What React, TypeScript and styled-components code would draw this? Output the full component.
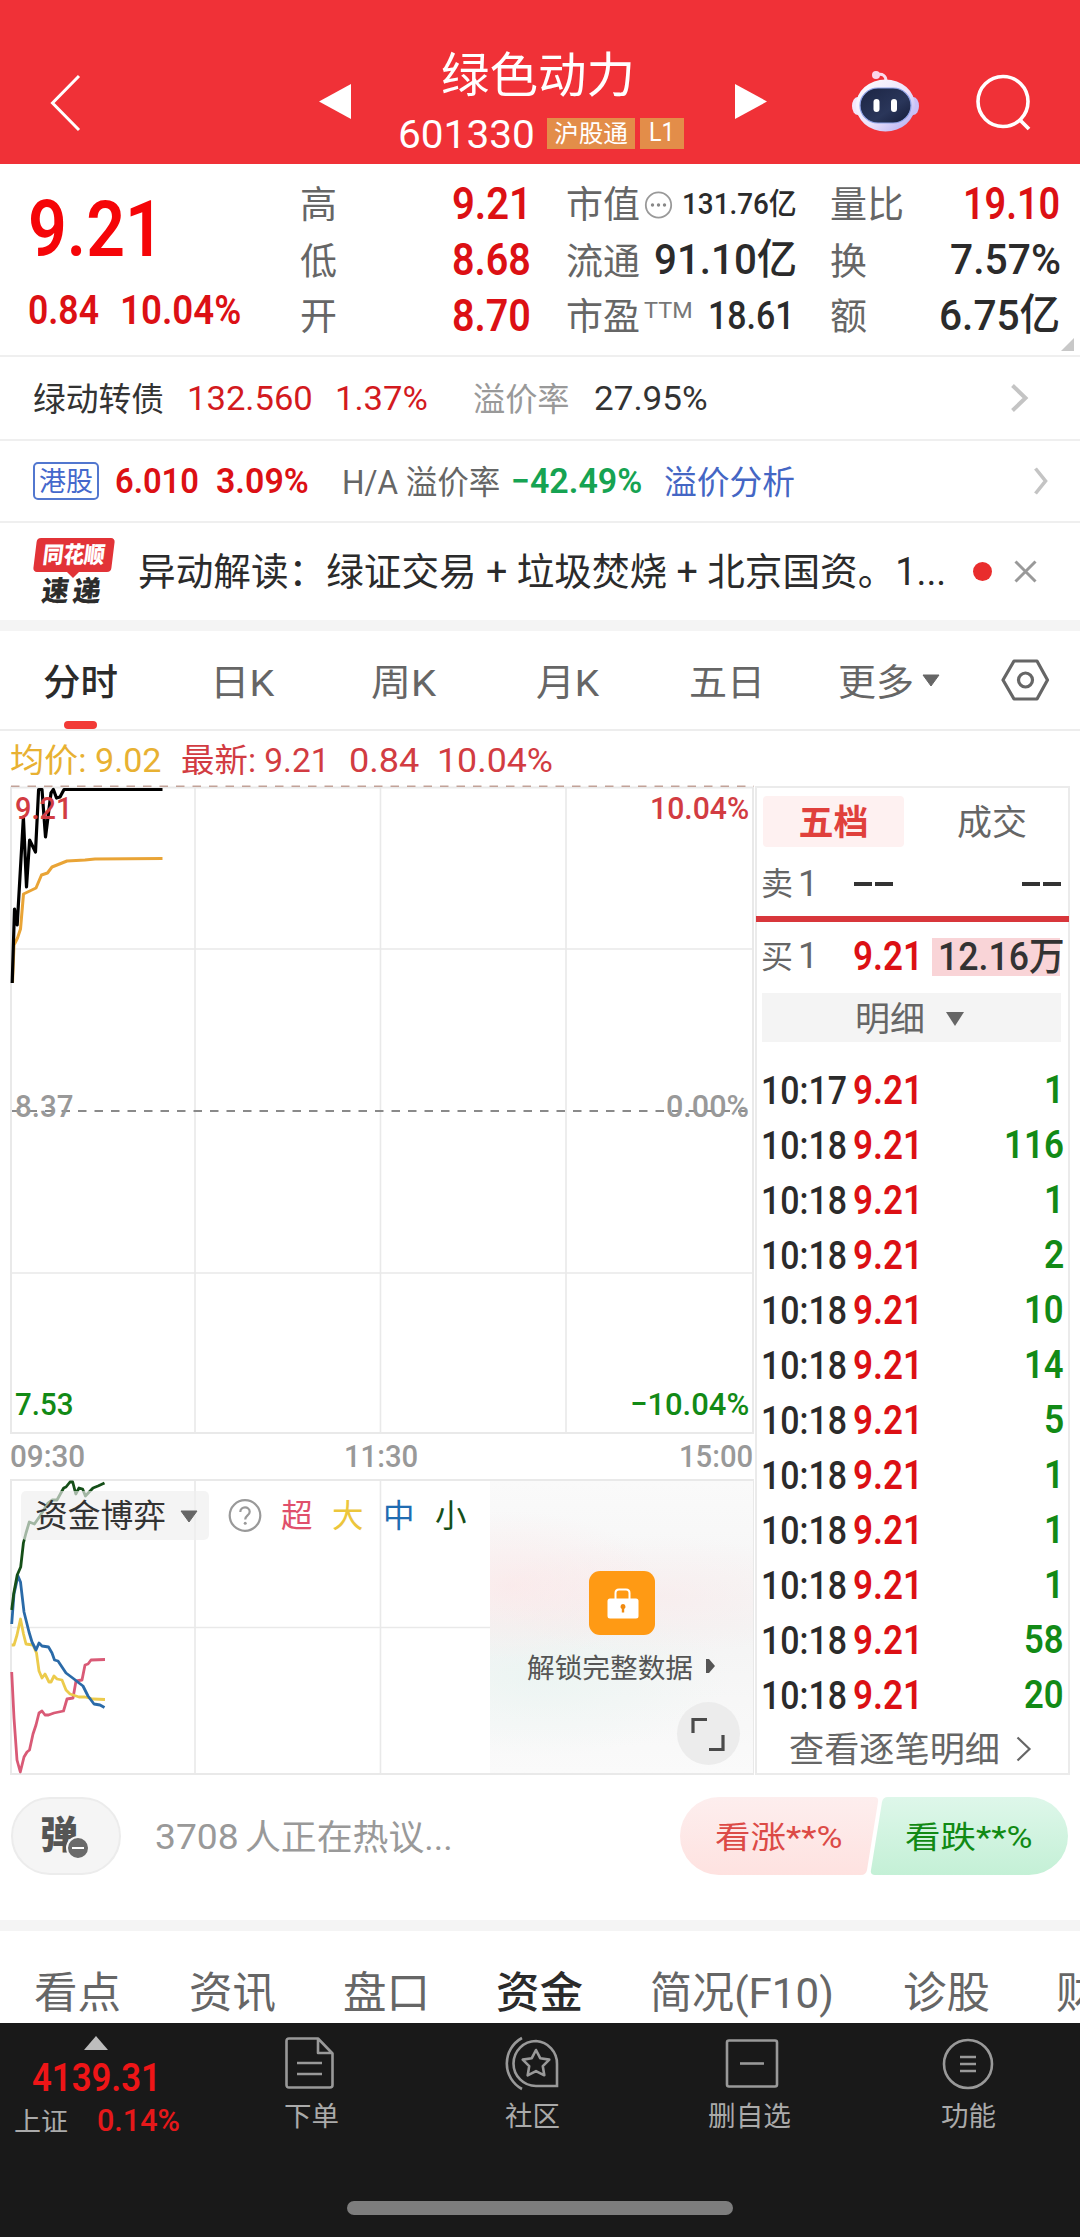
import React, { useLayoutEffect, useRef, useState } from "react";
import styled, { createGlobalStyle } from "styled-components";

const GlobalStyle = createGlobalStyle`
  * { box-sizing: border-box; }
  body {
    margin: 0;
    background: #fff;
    font-family: Roboto, "Noto Sans CJK SC", sans-serif;
  }
`;

/* ---------- text fitted to a column width ---------- */

interface FitStyle {
  $w: number;
  $ml?: number;
  $size: number;
  $color?: string;
  $weight?: number;
}

const FitBox = styled.span<FitStyle>`
  display: block;
  flex: none;
  width: ${(p) => p.$w}px;
  margin-left: ${(p) => p.$ml ?? 0}px;
  font-size: ${(p) => p.$size}px;
  line-height: 1.2;
  font-weight: ${(p) => p.$weight ?? 400};
  color: ${(p) => p.$color ?? "#666"};
  white-space: nowrap;
`;

const FitInner = styled.span`
  display: inline-block;
  white-space: pre;
  transform-origin: 0 50%;
`;

interface FitProps {
  w: number;
  ml?: number;
  size: number;
  color?: string;
  weight?: number;
  dy?: number;
  children: string;
}

function Fit({ w, ml, size, color, weight, dy = 1, children }: FitProps) {
  const ref = useRef<HTMLSpanElement>(null);
  const [scale, setScale] = useState(1);
  useLayoutEffect(() => {
    if (ref.current) setScale(w / ref.current.offsetWidth);
  }, [w, children]);
  return (
    <FitBox $w={w} $ml={ml} $size={size} $color={color} $weight={weight}>
      <FitInner ref={ref} style={{ transform: `translateY(${dy}px) scaleX(${scale})` }}>
        {children}
      </FitInner>
    </FitBox>
  );
}

const RED = "#dc1014";
const INK = "#2b2b2b";
const GREY = "#666";
const GREEN = "#128a16";

/* ---------- page ---------- */

const Page = styled.main`
  width: 1080px;
  height: 2237px;
  overflow: hidden;
  display: flex;
  flex-direction: column;
  background: #fff;
`;

const Icon = styled.svg<{ $ml?: number }>`
  display: block;
  flex: none;
  margin-left: ${(p) => p.$ml ?? 0}px;
  overflow: visible;
`;

/* ---------- header ---------- */

const Header = styled.header`
  height: 164px;
  flex: none;
  background: #f03137;
  display: flex;
  align-items: flex-start;
  padding: 47px 0 0 50px;
`;

const Row = styled.div<{ $h?: number; $pl?: number }>`
  display: flex;
  align-items: center;
  flex: none;
  height: ${(p) => (p.$h ? `${p.$h}px` : "auto")};
  padding-left: ${(p) => p.$pl ?? 0}px;
`;

const TitleBlock = styled.div`
  width: 288px;
  margin-left: 46px;
  display: flex;
  flex-direction: column;
`;

const CodeRow = styled.div`
  display: flex;
  align-items: center;
  height: 66px;
  margin-top: -1px;
`;

const Tag = styled.span<{ $w: number; $ml: number }>`
  flex: none;
  width: ${(p) => p.$w}px;
  height: 31px;
  margin-left: ${(p) => p.$ml}px;
  background: #e38d49;
  display: flex;
  justify-content: center;
  align-items: center;
`;

const HeaderIcon = styled(Icon)<{ $mt: number }>`
  margin-top: ${(p) => p.$mt}px;
`;

function Robot() {
  return (
    <HeaderIcon $ml={84} $mt={24} width="67" height="62" viewBox="0 0 67 62">
      <defs>
        <linearGradient id="shell" x1="0" y1="0" x2="1" y2="1">
          <stop offset="0" stopColor="#ffffff" />
          <stop offset="0.55" stopColor="#ece2fa" />
          <stop offset="1" stopColor="#aaa6f2" />
        </linearGradient>
        <linearGradient id="visor" x1="0" y1="0" x2="1" y2="1">
          <stop offset="0" stopColor="#1c2544" />
          <stop offset="0.6" stopColor="#2a365a" />
          <stop offset="1" stopColor="#141b38" />
        </linearGradient>
      </defs>
      <path d="M24 4 C31 2 34 5 34 10" fill="none" stroke="#fbdcec" strokeWidth="3" />
      <circle cx="24" cy="4" r="4" fill="#fbd7ea" />
      <ellipse cx="5.5" cy="35" rx="5.5" ry="9" fill="#f3e6fa" />
      <ellipse cx="61.5" cy="35" rx="5.5" ry="9" fill="#c9c0f8" />
      <ellipse cx="33.500" cy="34.500" rx="29.500" ry="26" fill="url(#shell)" />
      <rect x="8" y="17" width="51" height="35" rx="18" fill="url(#visor)" stroke="#8fa3e8" strokeWidth="1.200" />
      <rect x="21.500" y="28" width="6" height="13" rx="3" fill="#fff" />
      <rect x="39" y="28" width="6" height="13" rx="3" fill="#fff" />
    </HeaderIcon>
  );
}

function TopBar() {
  return (
    <Header>
      <HeaderIcon $mt={28} width="30" height="56" viewBox="0 0 30 56">
        <path d="M29 1 L2.500 28 L29 55" fill="none" stroke="#fff" strokeWidth="3" />
      </HeaderIcon>
      <HeaderIcon $ml={239} $mt={36} width="33" height="37" viewBox="0 0 33 37">
        <path d="M32 1 V36 L0 18.500 Z" fill="#fff" />
      </HeaderIcon>
      <TitleBlock>
        <Row $h={54} $pl={43}>
          <Fit w={194} size={48} color="#fff" dy={2}>绿色动力</Fit>
        </Row>
        <CodeRow>
          <Fit w={137} size={38.500} color="#fff" dy={2}>601330</Fit>
          <Tag $w={88} $ml={12}><Fit w={74} size={24} color="#fff">沪股通</Fit></Tag>
          <Tag $w={44} $ml={5}><Fit w={26} size={25} color="#fff" dy={0}>L1</Fit></Tag>
        </CodeRow>
      </TitleBlock>
      <HeaderIcon $ml={49} $mt={36} width="33" height="37" viewBox="0 0 33 37">
        <path d="M0 1 V36 L32 18.500 Z" fill="#fff" />
      </HeaderIcon>
      <Robot />
      <HeaderIcon $ml={57} $mt={27} width="56" height="56" viewBox="0 0 56 56">
        <circle cx="27" cy="27.500" r="25" fill="none" stroke="#fff" strokeWidth="3.600" />
        <path d="M43 45 L53 55" stroke="#fff" strokeWidth="3.800" />
      </HeaderIcon>
    </Header>
  );
}

/* ---------- quote ---------- */

const Quote = styled.section`
  position: relative;
  height: 193px;
  flex: none;
  border-bottom: 2px solid #efefef;
  display: flex;
  padding-top: 11px;
`;

const PriceCol = styled.div`
  width: 300px;
  padding-left: 28px;
`;

const StatCol = styled.div<{ $w: number }>`
  width: ${(p) => p.$w}px;
`;

const Stat = styled.div`
  display: flex;
  align-items: center;
  height: 56.500px;
`;

const Corner = styled.i`
  position: absolute;
  right: 6px;
  bottom: 4px;
  border-left: 13px solid transparent;
  border-bottom: 13px solid #c8c8c8;
`;

function QuotePanel() {
  return (
    <Quote>
      <PriceCol>
        <Row $h={105}>
          <Fit w={136} size={77} color="#f50508" weight={600} dy={3}>9.21</Fit>
        </Row>
        <Row $h={60}>
          <Fit w={71} size={40} color={RED} weight={600}>0.84</Fit>
          <Fit w={121} ml={21} size={40} color={RED} weight={600}>10.04%</Fit>
        </Row>
      </PriceCol>
      <StatCol $w={266}>
        <Stat>
          <Fit w={37} size={37} dy={3}>高</Fit>
          <Fit w={80} ml={115} size={44} color={RED} weight={600}>9.21</Fit>
        </Stat>
        <Stat>
          <Fit w={37} size={37} dy={3}>低</Fit>
          <Fit w={79} ml={115} size={44} color={RED} weight={600}>8.68</Fit>
        </Stat>
        <Stat>
          <Fit w={37} size={37} dy={2}>开</Fit>
          <Fit w={79} ml={115} size={44} color={RED} weight={600} dy={0}>8.70</Fit>
        </Stat>
      </StatCol>
      <StatCol $w={264}>
        <Stat>
          <Fit w={74} size={37} dy={3}>市值</Fit>
          <Icon $ml={4} width="29" height="29" viewBox="0 0 29 29">
            <circle cx="14.500" cy="16" r="12.700" fill="none" stroke="#999" strokeWidth="1.800" />
            <g fill="#888">
              <circle cx="8.500" cy="16" r="1.700" />
              <circle cx="14.500" cy="16" r="1.700" />
              <circle cx="20.500" cy="16" r="1.700" />
            </g>
          </Icon>
          <Fit w={115} ml={9} size={30} color={INK} weight={500}>131.76亿</Fit>
        </Stat>
        <Stat>
          <Fit w={74} size={37} dy={3}>流通</Fit>
          <Fit w={143} ml={14} size={42} color={INK} weight={500} dy={0}>91.10亿</Fit>
        </Stat>
        <Stat>
          <Fit w={74} size={37} dy={2}>市盈</Fit>
          <Fit w={49} ml={4} size={22} color="#777" dy={-5}>TTM</Fit>
          <Fit w={87} ml={15} size={39} color={INK} weight={500} dy={0}>18.61</Fit>
        </Stat>
      </StatCol>
      <StatCol $w={240}>
        <Stat>
          <Fit w={74} size={37} dy={3}>量比</Fit>
          <Fit w={97} ml={59} size={44} color={RED} weight={600}>19.10</Fit>
        </Stat>
        <Stat>
          <Fit w={37} size={37} dy={3}>换</Fit>
          <Fit w={111} ml={83} size={43} color={INK} weight={500} dy={0}>7.57%</Fit>
        </Stat>
        <Stat>
          <Fit w={37} size={37} dy={2}>额</Fit>
          <Fit w={121} ml={72} size={43} color={INK} weight={500} dy={0}>6.75亿</Fit>
        </Stat>
      </StatCol>
      <Corner />
    </Quote>
  );
}

/* ---------- info strips ---------- */

const Strip = styled.section<{ $h: number; $line?: boolean }>`
  height: ${(p) => p.$h}px;
  flex: none;
  display: flex;
  align-items: center;
  padding-left: 33px;
  border-bottom: ${(p) => (p.$line ? "2px solid #efefef" : "none")};
`;

const Outline = styled.span`
  width: 66px;
  height: 38px;
  border: 2px solid #5277cf;
  border-radius: 5px;
  display: flex;
  align-items: center;
  justify-content: center;
`;

const Band = styled.div<{ $h: number }>`
  height: ${(p) => p.$h}px;
  flex: none;
  background: #f4f4f4;
`;

const LogoBox = styled.div`
  width: 82px;
  height: 68px;
`;

const LogoTop = styled.div`
  width: 78px;
  height: 34px;
  margin-left: 2px;
  background: #e23337;
  border-radius: 4px;
  transform: skewX(-7deg);
  display: flex;
  align-items: center;
  justify-content: center;
`;

const LogoNotch = styled.i`
  display: block;
  width: 0;
  margin-left: 34px;
  border: 6px solid transparent;
  border-top-color: #e23337;
  border-bottom: none;
`;

const LogoBottom = styled.div`
  display: flex;
  margin: -4px 0 0 9px;
  transform: skewX(-7deg);
`;

const Dot = styled.i<{ $ml: number }>`
  width: 19px;
  height: 19px;
  margin-left: ${(p) => p.$ml}px;
  border-radius: 50%;
  background: #e92d2d;
`;

function Strips() {
  return (
    <>
      <Strip $h={84} $line>
        <Fit w={131} size={32.500} color="#333" dy={2}>绿动转债</Fit>
        <Fit w={126} ml={23} size={33.500} color="#d31a1e">132.560</Fit>
        <Fit w={93} ml={22} size={33.500} color="#d31a1e">1.37%</Fit>
        <Fit w={97} ml={45} size={32.500} color="#999" dy={2}>溢价率</Fit>
        <Fit w={114} ml={24} size={33.500} color="#333">27.95%</Fit>
        <Icon $ml={303} width="18" height="28" viewBox="0 0 18 28">
          <path d="M1.500 1.500 L14.500 14 L1.500 26.500" fill="none" stroke="#c4c4c4" strokeWidth="4" />
        </Icon>
      </Strip>
      <Strip $h={82} $line>
        <Outline>
          <Fit w={54} size={27} color="#4468cc">港股</Fit>
        </Outline>
        <Fit w={84} ml={16} size={35} color={RED} weight={600}>6.010</Fit>
        <Fit w={93} ml={17} size={35} color={RED} weight={600}>3.09%</Fit>
        <Fit w={158} ml={33} size={32.500} color={GREY} dy={2}>H/A 溢价率</Fit>
        <Fit w={131} ml={11} size={35} color="#16a352" weight={600}>−42.49%</Fit>
        <Fit w={131} ml={22} size={32.500} color="#4466c4" dy={2}>溢价分析</Fit>
        <Icon $ml={239} width="15" height="28" viewBox="0 0 15 28">
          <path d="M1.500 1.500 L11.500 14 L1.500 26.500" fill="none" stroke="#c4c4c4" strokeWidth="3.600" />
        </Icon>
      </Strip>
      <Strip $h={97}>
        <LogoBox>
          <LogoTop>
            <Fit w={62} size={23} color="#fff" weight={900}>同花顺</Fit>
          </LogoTop>
          <LogoNotch />
          <LogoBottom>
            <Fit w={27} size={28} color="#2c2c2c" weight={900}>速</Fit>
            <Fit w={28} ml={4} size={28} color="#2c2c2c" weight={900}>递</Fit>
          </LogoBottom>
        </LogoBox>
        <Fit w={808} ml={23} size={38} color={INK}>异动解读：绿证交易 + 垃圾焚烧 + 北京国资。1...</Fit>
        <Dot $ml={27} />
        <Icon $ml={22} width="23" height="23" viewBox="0 0 23 23">
          <path d="M1.500 1.500 L21.500 21.500 M21.500 1.500 L1.500 21.500" stroke="#999" strokeWidth="3" />
        </Icon>
      </Strip>
      <Band $h={11} />
    </>
  );
}

/* ---------- chart tabs ---------- */

const Tabs = styled.nav`
  position: relative;
  height: 100px;
  flex: none;
  display: flex;
  align-items: center;
  padding-left: 43px;
  border-bottom: 2px solid #ededed;
`;

const Underline = styled.i`
  position: absolute;
  left: 64px;
  bottom: 0;
  width: 33px;
  height: 8px;
  border-radius: 4px;
  background: #f23a36;
`;

function ChartTabs() {
  return (
    <Tabs>
      <Fit w={75} size={37} color={INK} weight={500} dy={4}>分时</Fit>
      <Fit w={64} ml={92} size={37} dy={4}>日K</Fit>
      <Fit w={65} ml={97} size={37} dy={4}>周K</Fit>
      <Fit w={63} ml={100} size={37} dy={4}>月K</Fit>
      <Fit w={76} ml={90} size={37} dy={4}>五日</Fit>
      <Fit w={76} ml={73} size={37} dy={4}>更多</Fit>
      <Icon $ml={8} width="18" height="12" viewBox="0 0 18 12">
        <path d="M1 1 H17 L9 12 Z" fill="#666" stroke="#666" strokeLinejoin="round" />
      </Icon>
      <Icon $ml={61} width="48" height="42" viewBox="0 0 48 42">
        <path d="M13 2 H36 L46.500 21 L36 40 H13 L2 21 Z" fill="none" stroke="#666" strokeWidth="3.200" strokeLinejoin="round" />
        <circle cx="24.500" cy="21" r="7" fill="none" stroke="#666" strokeWidth="3.200" />
      </Icon>
      <Underline />
    </Tabs>
  );
}

/* ---------- charts ---------- */

const Board = styled.section`
  display: flex;
  flex: none;
  height: 990px;
  padding-left: 10px;
`;

const ChartCol = styled.div`
  width: 745px;
  display: flex;
  flex-direction: column;
`;

const ChartBox = styled.div<{ $h: number }>`
  position: relative;
  height: ${(p) => p.$h}px;
`;

const AxisLabel = styled.div<{ $x: number; $y: number }>`
  position: absolute;
  left: ${(p) => p.$x}px;
  top: ${(p) => p.$y}px;
`;

const Axis = styled.div`
  display: flex;
  align-items: center;
  height: 44px;
`;

function PriceChart() {
  return (
    <ChartBox $h={650}>
      <Icon width="745" height="650" viewBox="10 785 745 650">
        <g stroke="#e9e9e9" strokeWidth="2" fill="none">
          <path d="M11 787.500 H753 V1433 H11 Z" />
          <path d="M11 949 H753 M11 1273 H753 M195 787 V1433 M380.500 787 V1433 M566 787 V1433" strokeWidth="1.600" />
        </g>
        <path d="M11 786.300 H754" stroke="#c2a298" strokeWidth="1.400" strokeDasharray="8.500 8" />
        <path d="M12 1111 H753" stroke="#8a8a8a" strokeWidth="1.800" strokeDasharray="8.500 8" />
        <path
          d="M12.500 983 L14 945 L17.500 938 L20.500 929 L23.500 894 L36 888 L41.500 875 L47.500 873 L52 867 L67 861 L85 860 L95 859 L162.500 858.500"
          fill="none" stroke="#e9a436" strokeWidth="3" strokeLinejoin="round"
        />
        <path
          d="M12.200 983 L14.500 909 L17.200 925 L23.400 817 L26.500 887 L29.600 840 L35.500 852 L38.600 789.500 H42 L45.500 837 L51 793 L53.400 789.500 L56.500 798 L60 797 L64 789.500 H162.500"
          fill="none" stroke="#000" strokeWidth="3.200" strokeLinejoin="round"
        />
      </Icon>
      <AxisLabel $x={5} $y={4}><Fit w={57} size={32} color="#d23c42" weight={500} dy={-0.5}>9.21</Fit></AxisLabel>
      <AxisLabel $x={640} $y={4}><Fit w={99} size={32} color="#d23c42" weight={500} dy={-0.5}>10.04%</Fit></AxisLabel>
      <AxisLabel $x={5} $y={302}><Fit w={58} size={32} color="#999" weight={500} dy={0}>8.37</Fit></AxisLabel>
      <AxisLabel $x={656} $y={302}><Fit w={83} size={32} color="#999" weight={500} dy={0}>0.00%</Fit></AxisLabel>
      <AxisLabel $x={5} $y={600}><Fit w={58} size={32} color={GREEN} weight={500} dy={0}>7.53</Fit></AxisLabel>
      <AxisLabel $x={620} $y={600}><Fit w={119} size={32} color={GREEN} weight={500} dy={0}>−10.04%</Fit></AxisLabel>
    </ChartBox>
  );
}

const Picker = styled.button`
  width: 188px;
  height: 49px;
  border: none;
  border-radius: 5px;
  background: rgba(238, 238, 238, 0.65);
  display: flex;
  align-items: center;
  padding: 0 0 0 14px;
  font-family: inherit;
  text-align: left;
`;

const PickerRow = styled.div`
  position: absolute;
  left: 11px;
  top: 12px;
  display: flex;
  align-items: center;
`;

const LockPanel = styled.div`
  position: absolute;
  left: 480px;
  top: 2px;
  width: 263px;
  height: 292px;
  background:
    radial-gradient(ellipse 150px 75px at 20px 105px, rgba(253, 228, 229, 0.6), rgba(253, 228, 229, 0)),
    radial-gradient(ellipse 170px 60px at 170px 115px, rgba(250, 230, 231, 0.5), rgba(250, 230, 231, 0)),
    radial-gradient(ellipse 190px 80px at 50px 195px, rgba(232, 244, 241, 0.7), rgba(232, 244, 241, 0)),
    linear-gradient(#fafafa, #f4f4f4 50%, #fafafa);
  display: flex;
  flex-direction: column;
  align-items: center;
  padding-top: 90px;
`;

const Lock = styled.div`
  width: 66px;
  height: 64px;
  border-radius: 11px;
  background: #ff9a14;
`;

const Expand = styled.div`
  position: absolute;
  right: 13px;
  bottom: 8px;
  width: 63px;
  height: 63px;
  border-radius: 50%;
  background: #ececec;
`;

function FundChart() {
  return (
    <ChartBox $h={296}>
      <Icon width="745" height="296" viewBox="10 1479 745 296">
        <g stroke="#e9e9e9" strokeWidth="2" fill="none">
          <path d="M11 1480 H753 V1774 H11 Z" />
          <path d="M11 1627.500 H490 M195 1480 V1774 M380.500 1480 V1774" strokeWidth="1.600" />
        </g>
        <g fill="none" strokeWidth="2.800" strokeLinejoin="round">
          <path stroke="#d95a76" d="M11.700 1672 L14 1718 L17 1760 L20.300 1772 L24 1757 L27 1752 L29.500 1750 L33 1734 L36 1725 L39 1713 L42 1711 L45 1715 L48.500 1715 L54 1713 L63.500 1711 L67 1699 L73 1698 L76 1681 L82 1680 L85 1665 L88 1664 L91 1660 L105 1659.500" />
          <path stroke="#eccb4c" d="M11.700 1645 H14 L17 1635 L20.500 1619 L23.500 1634 L26 1644 L33 1645 L36.500 1653 L39 1671 L42 1678 L45 1674 L49 1682 L51 1682 L54 1676 L57 1679 L62 1680 L66 1690 L70 1694 L79 1697 L85 1697 L93 1699 L105 1699.500" />
          <path stroke="#2a6aa8" d="M11.700 1624 L14 1594 L18 1576 L20.500 1582 L24 1612 L29 1632 L32 1642 L36 1650 L39 1643 L42 1646 L48.500 1647 L52 1653 L54.500 1660 L58 1661 L66 1673 L74 1679 L79 1683 L83 1686 L88 1696 L94 1704 L100 1705 L104.500 1707.500" />
          <path stroke="#154f18" d="M11.700 1610 L13.800 1593 L17.200 1575 L20.700 1567 L23.400 1543 L26 1533 L29.300 1522 L34.400 1524 L40 1516 L48 1503 L52 1500 L57 1500 L63.700 1488 L66 1487 L70 1482 L72.700 1482 L75.800 1494 L79 1488 L82.600 1489 L85.400 1496 L93 1488 L98 1486 L104.500 1483" />
        </g>
      </Icon>
      <PickerRow>
        <Picker type="button">
          <Fit w={131} size={32} color="#333">资金博弈</Fit>
          <Icon $ml={14} width="18" height="12" viewBox="0 0 18 12">
            <path d="M1 1 H17 L9 12 Z" fill="#666" stroke="#666" strokeLinejoin="round" />
          </Icon>
        </Picker>
        <Icon $ml={19} width="34" height="34" viewBox="0 0 34 34">
          <circle cx="17" cy="16.500" r="15.300" fill="none" stroke="#999" strokeWidth="2.200" />
          <path d="M12.300 13 C12.300 7 21.700 7 21.700 12.700 C21.700 16.500 17.200 16.300 17.200 20.500" fill="none" stroke="#999" strokeWidth="2.200" />
          <circle cx="17.200" cy="24.300" r="1.500" fill="#999" />
        </Icon>
        <Fit w={32} ml={19} size={31.500} color="#e0506c">超</Fit>
        <Fit w={32} ml={19} size={31.500} color="#ecc63c">大</Fit>
        <Fit w={32} ml={19} size={31.500} color="#1f6cb2">中</Fit>
        <Fit w={32} ml={20} size={31.500} color="#154f18">小</Fit>
      </PickerRow>
      <LockPanel>
        <Lock>
          <Icon width="66" height="64" viewBox="0 0 66 64">
            <path d="M26.500 29 V22 Q26.500 18.500 30 18.500 H37 Q40.500 18.500 40.500 22 V29" fill="none" stroke="#fff" strokeWidth="2" />
            <rect x="18.500" y="27.500" width="31" height="20" rx="2.500" fill="#fff" />
            <path d="M34 33 a2.700 2.700 0 0 1 1.200 5 V41.500 H32.800 V38 A2.700 2.700 0 0 1 34 33" fill="#f08a10" />
          </Icon>
        </Lock>
        <Row $h={62}>
          <Fit w={166} size={27.500} color="#555" dy={2}>解锁完整数据</Fit>
          <Icon $ml={12} width="11" height="16" viewBox="0 0 11 16">
            <path d="M1 1 V15 L4 15 L10 8 L4 1 Z" fill="#555" />
          </Icon>
        </Row>
        <Expand>
          <Icon width="63" height="63" viewBox="0 0 63 63">
            <path d="M16 31 V17.500 H30 M46 33 V47.500 H32" fill="none" stroke="#4a4a4a" strokeWidth="3.200" />
          </Icon>
        </Expand>
      </LockPanel>
    </ChartBox>
  );
}

/* ---------- order book ---------- */

const Book = styled.aside`
  width: 315px;
  height: 989px;
  margin-top: 1px;
  border: 2px solid #ebebeb;
  display: flex;
  flex-direction: column;
`;

const BookTabs = styled.div`
  display: flex;
  align-items: center;
  height: 67px;
  padding-left: 6px;
`;

const BookTab = styled.div<{ $on?: boolean }>`
  width: 141px;
  height: 51px;
  border-radius: 4px;
  display: flex;
  align-items: center;
  justify-content: center;
  background: ${(p) => (p.$on ? "#fef1f1" : "transparent")};
`;

const BookRow = styled.div<{ $h: number }>`
  display: flex;
  align-items: center;
  flex: none;
  height: ${(p) => p.$h}px;
  padding-left: 4px;
`;

const Divider = styled.div`
  height: 6px;
  flex: none;
  margin: 0 -1px;
  background: #d8363b;
`;

const Volume = styled.span`
  margin-left: 9px;
  width: 128px;
  height: 38px;
  display: flex;
  align-items: center;
  background: #f9d4d7;
`;

const Detail = styled.div`
  height: 49px;
  flex: none;
  width: 299px;
  margin: 1px 0 20px 5px;
  background: #f4f4f4;
  display: flex;
  align-items: center;
`;

const Dashes = styled.span<{ $ml: number }>`
  display: flex;
  gap: 3px;
  margin-left: ${(p) => p.$ml}px;
  padding-bottom: 3px;
  &::before,
  &::after {
    content: "";
    width: 18px;
    height: 4px;
    background: #333;
  }
`;

const Tick = styled.div`
  display: flex;
  align-items: center;
  flex: none;
  height: 55px;
  padding-left: 4px;
`;

const Lots = styled.div`
  flex: 1;
  display: flex;
  justify-content: flex-end;
  padding-right: 4px;
`;

const ticks: { time: string; lots: string; w: number }[] = [
  { time: "10:17", lots: "1", w: 20 },
  { time: "10:18", lots: "116", w: 60 },
  { time: "10:18", lots: "1", w: 20 },
  { time: "10:18", lots: "2", w: 20 },
  { time: "10:18", lots: "10", w: 40 },
  { time: "10:18", lots: "14", w: 40 },
  { time: "10:18", lots: "5", w: 20 },
  { time: "10:18", lots: "1", w: 20 },
  { time: "10:18", lots: "1", w: 20 },
  { time: "10:18", lots: "1", w: 20 },
  { time: "10:18", lots: "58", w: 40 },
  { time: "10:18", lots: "20", w: 40 },
];

function OrderBook() {
  return (
    <Book>
      <BookTabs>
        <BookTab $on>
          <Fit w={70} size={35} color="#e0403c" weight={700} dy={2}>五档</Fit>
        </BookTab>
        <BookTab>
          <Fit w={70} ml={35} size={35} dy={2}>成交</Fit>
        </BookTab>
      </BookTabs>
      <BookRow $h={61}>
        <Fit w={32} size={32} dy={-1}>卖</Fit>
        <Fit w={20} ml={5} size={36} dy={-1}>1</Fit>
        <Dashes $ml={36} />
        <Dashes $ml={129} />
      </BookRow>
      <Divider />
      <BookRow $h={70}>
        <Fit w={32} size={32} dy={0}>买</Fit>
        <Fit w={20} ml={5} size={36} dy={0}>1</Fit>
        <Fit w={70} ml={35} size={40} color={RED} weight={600} dy={0}>9.21</Fit>
        <Volume>
          <Fit w={127} ml={6} size={39} color="#333" weight={500} dy={0}>12.16万</Fit>
        </Volume>
      </BookRow>
      <Detail>
        <Fit w={70} ml={93} size={34.500} dy={2}>明细</Fit>
        <Icon $ml={21} width="18" height="14" viewBox="0 0 18 14">
          <path d="M0 1 H18 L9 15 Z" fill="#666" />
        </Icon>
      </Detail>
      {ticks.map((t, i) => (
        <Tick key={i}>
          <Fit w={86} size={39} color={INK} weight={500} dy={2}>{t.time}</Fit>
          <Fit w={70} ml={6} size={40} color={RED} weight={600}>9.21</Fit>
          <Lots>
            <Fit w={t.w} size={39} color={GREEN} weight={600}>{t.lots}</Fit>
          </Lots>
        </Tick>
      ))}
      <BookRow $h={50}>
        <Fit w={211} ml={28} size={35} dy={4}>查看逐笔明细</Fit>
        <Icon $ml={16} width="16" height="24" viewBox="0 0 16 24">
          <path d="M1.500 2.500 L13.500 14 L1.500 25.500" fill="none" stroke="#666" strokeWidth="2.200" />
        </Icon>
      </BookRow>
    </Book>
  );
}

/* ---------- discussion row ---------- */

const Talk = styled.section`
  height: 145px;
  flex: none;
  display: flex;
  padding: 22px 0 0 11px;
`;

const Bullet = styled.div`
  position: relative;
  width: 110px;
  height: 78px;
  border-radius: 39px;
  border: 2px solid #ececec;
  background: #f5f5f5;
  display: flex;
  align-items: center;
`;

const Mute = styled.i`
  position: absolute;
  left: 53px;
  top: 37px;
  width: 24px;
  height: 24px;
  border-radius: 50%;
  border: 2px solid #f5f5f5;
  background: #6a6a6a;
  display: flex;
  align-items: center;
  justify-content: center;
  &::before {
    content: "";
    width: 12px;
    height: 2px;
    background: #fff;
  }
`;

const Vote = styled.div`
  position: relative;
  width: 388px;
  height: 78px;
  margin-left: 227px;
`;

const VoteText = styled.div`
  position: absolute;
  inset: 0;
  display: flex;
  align-items: center;
  padding-left: 34px;
`;

function TalkRow() {
  return (
    <Talk>
      <Bullet>
        <Fit w={38} ml={27} size={38} color="#555" weight={900} dy={0}>弹</Fit>
        <Mute />
      </Bullet>
      <Row $h={78}>
        <Fit w={84} ml={34} size={35} color="#999" dy={2}>3708</Fit>
        <Fit w={208} ml={6} size={35} color="#999" dy={3}>人正在热议...</Fit>
      </Row>
      <Vote>
        <Icon width="388" height="78" viewBox="0 0 388 78">
          <defs>
            <linearGradient id="up" x1="0" y1="0" x2="0" y2="1">
              <stop offset="0" stopColor="#fdeeee" />
              <stop offset="1" stopColor="#fee2e0" />
            </linearGradient>
            <linearGradient id="down" x1="0" y1="0" x2="0" y2="1">
              <stop offset="0" stopColor="#def7ea" />
              <stop offset="1" stopColor="#c4f0d6" />
            </linearGradient>
          </defs>
          <path d="M39 0 H194 Q199 0 198 5 L187 73 Q186 78 181 78 H39 A39 39 0 0 1 39 0 Z" fill="url(#up)" />
          <path d="M208 0 H349 A39 39 0 0 1 349 78 H195 Q190 78 191 73 L202 5 Q203 0 208 0 Z" fill="url(#down)" />
        </Icon>
        <VoteText>
          <Fit w={127} ml={1} size={31} color="#dc4a46" dy={2}>看涨**%</Fit>
          <Fit w={127} ml={63} size={31} color="#118a14" dy={2}>看跌**%</Fit>
        </VoteText>
      </Vote>
    </Talk>
  );
}

/* ---------- section tabs and bottom bar ---------- */

const Sections = styled.nav`
  height: 92px;
  flex: none;
  display: flex;
  align-items: center;
  padding: 30px 0 0 34px;
  overflow: hidden;
`;

const Dock = styled.footer`
  height: 214px;
  flex: none;
  background: #191919;
  display: flex;
  flex-direction: column;
  align-items: center;
`;

const DockItems = styled.div`
  width: 1080px;
  height: 178px;
  display: flex;
`;

const Index = styled.div`
  width: 200px;
  padding-top: 13px;
`;

const DockItem = styled.div<{ $w: number; $ml: number }>`
  width: ${(p) => p.$w}px;
  margin-left: ${(p) => p.$ml}px;
  padding-top: 13px;
  display: flex;
  flex-direction: column;
  align-items: center;
`;

const HomeBar = styled.i`
  width: 386px;
  height: 14px;
  border-radius: 7px;
  background: #7d7d7d;
`;

function SectionTabs() {
  return (
    <Sections>
      <Fit w={87} size={43} dy={2}>看点</Fit>
      <Fit w={87} ml={68} size={43} dy={2}>资讯</Fit>
      <Fit w={87} ml={67} size={43} dy={2}>盘口</Fit>
      <Fit w={87} ml={66} size={43} color={INK} weight={500} dy={2}>资金</Fit>
      <Fit w={184} ml={67} size={43} dy={2}>简况(F10)</Fit>
      <Fit w={87} ml={69} size={43} dy={2}>诊股</Fit>
      <Fit w={43} ml={66} size={43} dy={2}>财</Fit>
    </Sections>
  );
}

function BottomBar() {
  const line = { fill: "none", stroke: "#999", strokeWidth: 2.6 };
  return (
    <Dock>
      <DockItems>
        <Index>
          <Icon $ml={84} width="24" height="14" viewBox="0 0 24 14">
            <path d="M12 0 L24 14 H0 Z" fill="#bdbdbd" />
          </Icon>
          <Row $h={54} $pl={32}>
            <Fit w={129} size={39} color="#ee1517" weight={600}>4139.31</Fit>
          </Row>
          <Row $h={34} $pl={14}>
            <Fit w={54} size={26.500} color="#aaa">上证</Fit>
            <Fit w={83} ml={29} size={32} color="#e5181a" weight={500} dy={-1}>0.14%</Fit>
          </Row>
        </Index>
        <DockItem $w={60} $ml={80}>
          <Icon width="50" height="54" viewBox="0 0 50 54">
            <path {...line} strokeLinejoin="round" d="M1.500 5 Q1.500 2.500 4 2.500 H33 L47.500 17.500 V49 Q47.500 51.500 45 51.500 H4 Q1.500 51.500 1.500 49 Z M33 2.500 V17 H47.500" />
            <path {...line} d="M12 27 H37 M12 38 H37" />
          </Icon>
          <Row $h={50} $pl={2}><Fit w={55} size={27} color="#aaa" dy={2}>下单</Fit></Row>
        </DockItem>
        <DockItem $w={60} $ml={162}>
          <Icon width="56" height="54" viewBox="0 0 56 54">
            <path {...line} d="M18 2 A29 29 0 0 0 18 53" />
            <path {...line} d="M32 5 A22.500 22.500 0 1 0 32 50 H53 V28 A22.500 22.500 0 0 0 32 5 Z" />
            <path {...line} strokeLinejoin="round" d="M32 14 L36.200 22.200 L45.300 23.600 L38.800 30.200 L40.300 39.300 L32 35.100 L23.700 39.300 L25.200 30.200 L18.700 23.600 L27.800 22.200 Z" />
          </Icon>
          <Row $h={50}><Fit w={55} size={27} color="#aaa" dy={2}>社区</Fit></Row>
        </DockItem>
        <DockItem $w={90} $ml={142}>
          <Icon $ml={6} width="54" height="54" viewBox="0 0 54 54">
            <rect {...line} x="2" y="4.500" width="50" height="46" rx="2" />
            <path {...line} d="M15 27.500 H39" />
          </Icon>
          <Row $h={50}><Fit w={83} size={27} color="#aaa" dy={2}>删自选</Fit></Row>
        </DockItem>
        <DockItem $w={60} $ml={144}>
          <Icon width="54" height="54" viewBox="0 0 54 54">
            <circle {...line} cx="27" cy="28" r="24" />
            <path {...line} d="M19 21 H35 M19 28 H35 M19 35 H35" />
          </Icon>
          <Row $h={50}><Fit w={55} size={27} color="#aaa" dy={2}>功能</Fit></Row>
        </DockItem>
      </DockItems>
      <HomeBar />
    </Dock>
  );
}

const Legend = styled.div`
  height: 54px;
  flex: none;
  display: flex;
  align-items: center;
  padding-left: 10px;
`;

export default function App() {
  return (
    <Page>
      <GlobalStyle />
      <TopBar />
      <QuotePanel />
      <Strips />
      <ChartTabs />
      <Legend>
        <Fit w={152} size={33} color="#e8b132" dy={3}>均价: 9.02</Fit>
        <Fit w={149} ml={19} size={33} color="#d23c42" dy={3}>最新: 9.21</Fit>
        <Fit w={70} ml={19} size={33} color="#d23c42" dy={3}>0.84</Fit>
        <Fit w={116} ml={18} size={33} color="#d23c42" dy={3}>10.04%</Fit>
      </Legend>
      <Board>
        <ChartCol>
          <PriceChart />
          <Axis>
            <Fit w={75} size={32} color="#999" dy={-1} weight={500}>09:30</Fit>
            <Fit w={74} ml={259} size={32} color="#999" dy={-1} weight={500}>11:30</Fit>
            <Fit w={74} ml={261} size={32} color="#999" dy={-1} weight={500}>15:00</Fit>
          </Axis>
          <FundChart />
        </ChartCol>
        <OrderBook />
      </Board>
      <TalkRow />
      <Band $h={11} />
      <SectionTabs />
      <BottomBar />
    </Page>
  );
}
